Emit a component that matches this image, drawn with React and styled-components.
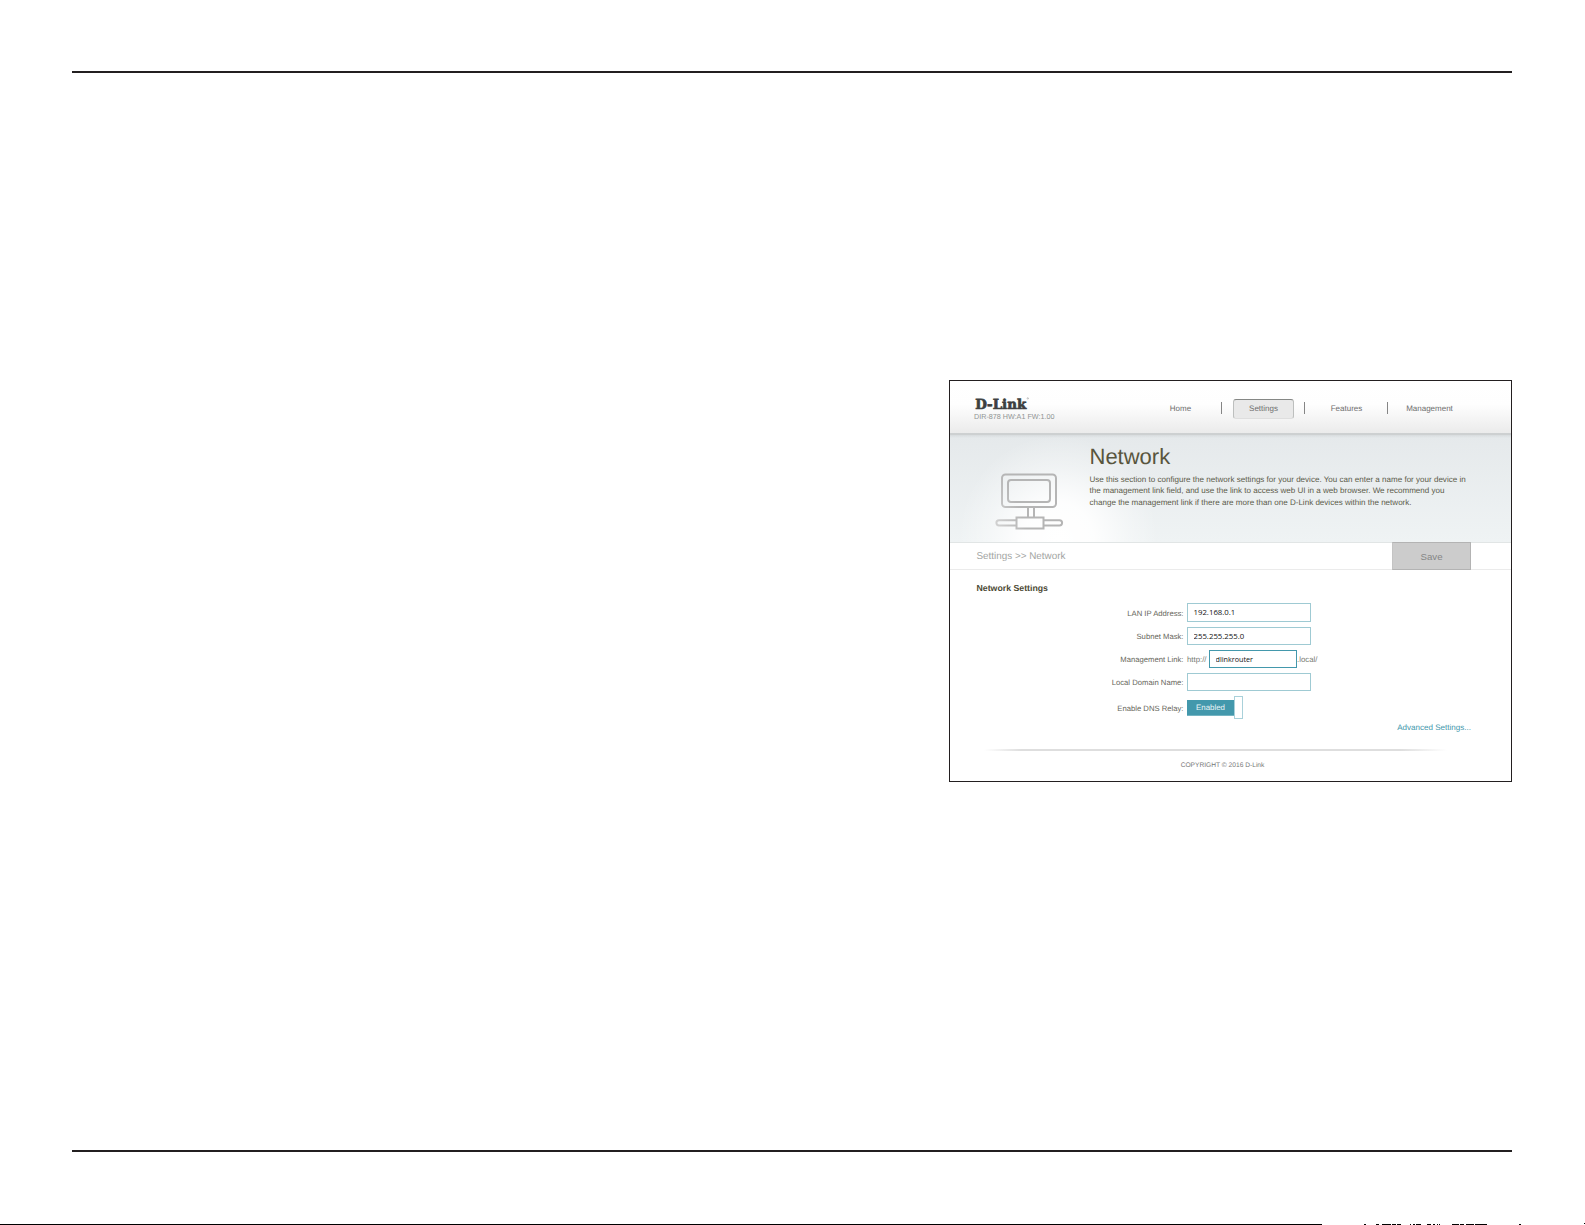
import React from 'react'
import styled, { createGlobalStyle } from 'styled-components'

const sans = "'Liberation Sans', Arial, sans-serif"
const inputSans = "'Open Sans', 'Noto Sans', sans-serif"
const ink = '#231f20'
const teal = '#4398ac'

const GlobalStyle = createGlobalStyle`
  * {
    box-sizing: border-box;
  }

  body {
    margin: 0;
    background: #fff;
    font-family: ${sans};
    text-rendering: geometricPrecision;
  }
`

const Page = styled.div`
  width: 1585px;
  height: 1225px;
  display: flex;
  flex-direction: column;
  padding-top: 71px;
  overflow: hidden;
`
const Rule = styled.div`
  flex: none;
  height: 2px;
  margin: 0 73px 0 72px;
  background: ${ink};
`
const Body = styled.div`
  flex: none;
  height: 1077px;
  padding: 307px 73px 0 0;
  display: flex;
  justify-content: flex-end;
  align-items: flex-start;
`
const PageEdge = styled.div`
  margin-top: auto;
  height: 2px;
  display: flex;

  svg {
    display: block;
  }
`

const Panel = styled.main`
  width: 563px;
  height: 402px;
  border: 1px solid ${ink};
  background: #fff;
  display: flex;
  flex-direction: column;
  white-space: nowrap;
`

const Header = styled.header`
  height: 54px;
  flex: none;
  display: flex;
  justify-content: space-between;
  border-bottom: 2px solid #cdd0d1;
  background: linear-gradient(#fff 0%, #fefefe 45%, #ebebeb 100%);
`
const Brand = styled.div`
  padding: 12px 0 0 24px;

  svg {
    display: block;
    overflow: visible;
  }
`
const Model = styled.div`
  font-size: 7.2px;
  line-height: 10px;
  color: #909494;
`
const Nav = styled.nav`
  display: flex;
  align-items: flex-start;
  padding: 18px 40px 0 0;
`
const NavItem = styled.a`
  width: 61px;
  height: 20px;
  margin: 0 12px 0 10px;
  text-align: center;
  font-size: 8px;
  line-height: 17px;
  color: #6e6e6e;
  border: 1px solid ${({ $active }) => ($active ? '#bdbfbe' : 'transparent')};
  border-top-color: ${({ $active }) => ($active ? '#858785' : 'transparent')};
  border-bottom-color: ${({ $active }) => ($active ? '#dedede' : 'transparent')};
  border-radius: 3px;
  background: ${({ $active }) => ($active ? '#e9e9e9' : 'transparent')};

  &:last-child {
    margin-right: 11px;
  }
`
const Divider = styled.span`
  width: 1px;
  height: 12px;
  margin: 3px 1px 0 -2px;
  background: #858585;
`

const Banner = styled.section`
  height: 108px;
  flex: none;
  display: flex;
  border-bottom: 1px solid #e1e5e5;
  background:
    linear-gradient(rgba(205, 209, 211, 0.55), rgba(230, 234, 236, 0) 3px),
    radial-gradient(
      ellipse 100px 104px at 108px 104px,
      #fff 0%,
      rgba(255, 255, 255, 0.9) 35%,
      rgba(255, 255, 255, 0.35) 70%,
      rgba(255, 255, 255, 0) 100%
    ),
    linear-gradient(#e5e9eb, #eff3f4);
`
const IconBox = styled.div`
  width: 139.5px;
  padding: 37px 0 0 44px;
`
const Title = styled.h1`
  margin: 9px 0 0;
  font-size: 22px;
  font-weight: 400;
  line-height: 26px;
  color: #58553d;
`
const Intro = styled.p`
  margin: 4px 0 0;
  font-size: 8.05px;
  line-height: 11.4px;
  color: #5b5a49;
`

const Bar = styled.div`
  height: 27px;
  flex: none;
  display: flex;
  justify-content: space-between;
  border-bottom: 1px solid #ebebeb;
`
const Crumbs = styled.div`
  padding-left: 26.5px;
  font-size: 9.9px;
  line-height: 28px;
  color: #a3a5a3;
`
const Save = styled.button`
  width: 79px;
  height: 28px;
  margin: -1px 40px 0 0;
  padding: 2px 0 0;
  border: 1px solid #b3b3b3;
  border-left-color: #c4c4c4;
  background: #ccc;
  color: #858686;
  font-family: ${sans};
  font-size: 9.7px;
  line-height: 24px;
`

const SectionTitle = styled.h2`
  margin: 12px 0 0 26.5px;
  font-size: 8.75px;
  line-height: 12px;
  color: #4c4933;
`
const Form = styled.div`
  margin-top: 9px;
  display: grid;
  grid-template-rows: 19px 18px 18px 18px 23px;
  row-gap: 5px;
`
const Row = styled.div`
  display: flex;
  align-items: center;
`
const Label = styled.label`
  width: 233.5px;
  margin-right: 3.5px;
  padding-top: 1px;
  text-align: right;
  font-size: 7.7px;
  line-height: 17px;
  color: #66665b;
`
const Field = styled.input`
  width: ${({ $focused }) => ($focused ? 88 : 124)}px;
  height: 100%;
  padding: 0 0 1px 5.5px;
  border: 1px solid ${({ $focused }) => ($focused ? teal : '#9fcad3')};
  border-radius: 0;
  outline: none;
  background: #fff;
  color: #111;
  font-family: ${inputSans};
  font-size: ${({ $focused }) => ($focused ? 7.2 : 7.8)}px;
`
const Affix = styled.span`
  width: ${({ $width }) => $width};
  padding-top: 2px;
  font-size: 7.8px;
  line-height: 16px;
  color: #777a72;
`
const Toggle = styled.div`
  height: 23px;
  display: flex;
  align-items: center;
`
const ToggleLabel = styled.span`
  width: 47px;
  height: 16px;
  background: ${teal};
  border-bottom: 1px solid #74b4c2;
  color: #e9f5f7;
  text-align: center;
  font-size: 7.9px;
  line-height: 16px;
`
const Knob = styled.span`
  width: 9px;
  height: 23px;
  border: 1px solid #a9d1da;
  background: #fff;
`
const Advanced = styled.a`
  align-self: flex-end;
  margin: 3px 40px 0 0;
  font-size: 8.05px;
  line-height: 12px;
  color: ${teal};
`
const Footer = styled.footer`
  margin-top: 15px;
  text-align: center;
  font-size: 6.65px;
  line-height: 10px;
  color: #777;

  &::before {
    content: '';
    display: block;
    height: 2px;
    margin: 0 64px 10px 34px;
    background: linear-gradient(90deg, rgba(222, 222, 222, 0), #dedede 8%, #dedede 90%, rgba(222, 222, 222, 0));
  }
`
const Copyright = styled.div`
  padding-right: 16px;
`

const Logo = () => (
  <svg width='60' height='19' viewBox='0 0 60 19'>
    <text
      x='1.2'
      y='15.5'
      textLength='51'
      lengthAdjust='spacingAndGlyphs'
      fontFamily='DejaVu Serif'
      fontWeight='700'
      fontSize='13.8'
      fill='#3d3f40'
      stroke='#3d3f40'
      strokeWidth='0.7'
    >
      D-Link
    </text>
    <circle cx='53.8' cy='5.4' r='0.7' fill='none' stroke='#777' strokeWidth='0.4' />
  </svg>
)

const NetworkIcon = () => (
  <svg width='72' height='58' viewBox='0 0 72 58'>
    <defs>
      <linearGradient id='metal' gradientUnits='userSpaceOnUse' x1='0' y1='50' x2='26' y2='40'>
        <stop offset='0' stopColor='#d2d2d2' />
        <stop offset='1' stopColor='#b5b5b5' />
      </linearGradient>
    </defs>
    <g fill='none' stroke='url(#metal)' strokeWidth='2'>
      <rect x='8' y='2.5' width='54' height='32.5' rx='3.5' />
      <rect x='14' y='8' width='42' height='22' rx='3' />
      <path d='M34 35v10M40 35v10' />
      <rect x='22.5' y='45.5' width='27' height='11' />
      <path d='M22 48.2H5a2.6 2.6 0 0 0 0 5.2h17M50 48.2h15.5a2.6 2.6 0 0 1 0 5.2H50' />
    </g>
  </svg>
)

// [x, width] of the marks along the bottom edge
const edgeMarks = [
  [0, 1322], [1364, 2], [1376, 3], [1382, 9], [1392, 4], [1397, 4],
  [1410, 1], [1413, 2], [1416, 5], [1427, 4], [1433, 2], [1437, 1],
  [1439, 1], [1452, 7], [1460, 4], [1466, 8], [1475, 12], [1519, 2],
]

const navItems = ['Home', 'Settings', 'Features', 'Management']

const App = () => (
  <Page>
    <GlobalStyle />
    <Rule />
    <Body>
      <Panel>
        <Header>
          <Brand>
            <Logo />
            <Model>DIR-878 HW:A1 FW:1.00</Model>
          </Brand>
          <Nav>
            {navItems.map((item, i) => (
              <React.Fragment key={item}>
                {i > 0 && <Divider />}
                <NavItem $active={item === 'Settings'}>{item}</NavItem>
              </React.Fragment>
            ))}
          </Nav>
        </Header>
        <Banner>
          <IconBox>
            <NetworkIcon />
          </IconBox>
          <div>
            <Title>Network</Title>
            <Intro>
              Use this section to configure the network settings for your device. You can enter a name for your device in
              <br />
              the management link field, and use the link to access web UI in a web browser. We recommend you
              <br />
              change the management link if there are more than one D-Link devices within the network.
            </Intro>
          </div>
        </Banner>
        <Bar>
          <Crumbs>Settings &gt;&gt; Network</Crumbs>
          <Save>Save</Save>
        </Bar>
        <SectionTitle>Network Settings</SectionTitle>
        <Form>
          <Row>
            <Label>LAN IP Address:</Label>
            <Field defaultValue='192.168.0.1' />
          </Row>
          <Row>
            <Label>Subnet Mask:</Label>
            <Field defaultValue='255.255.255.0' />
          </Row>
          <Row>
            <Label>Management Link:</Label>
            <Affix $width='22px'>http://</Affix>
            <Field $focused defaultValue='dlinkrouter' />
            <Affix $width='24px'>.local/</Affix>
          </Row>
          <Row>
            <Label>Local Domain Name:</Label>
            <Field />
          </Row>
          <Row>
            <Label>Enable DNS Relay:</Label>
            <Toggle>
              <ToggleLabel>Enabled</ToggleLabel>
              <Knob />
            </Toggle>
          </Row>
        </Form>
        <Advanced>Advanced Settings...</Advanced>
        <Footer>
          <Copyright>COPYRIGHT © 2016 D-Link</Copyright>
        </Footer>
      </Panel>
    </Body>
    <Rule />
    <PageEdge>
      <svg width='1585' height='2' shapeRendering='crispEdges'>
        {edgeMarks.map(([x, width]) => (
          <rect key={x} x={x} y='1' width={width} height='1' />
        ))}
        <rect x='1584' y='0' width='1' height='1' />
      </svg>
    </PageEdge>
  </Page>
)

export default App
